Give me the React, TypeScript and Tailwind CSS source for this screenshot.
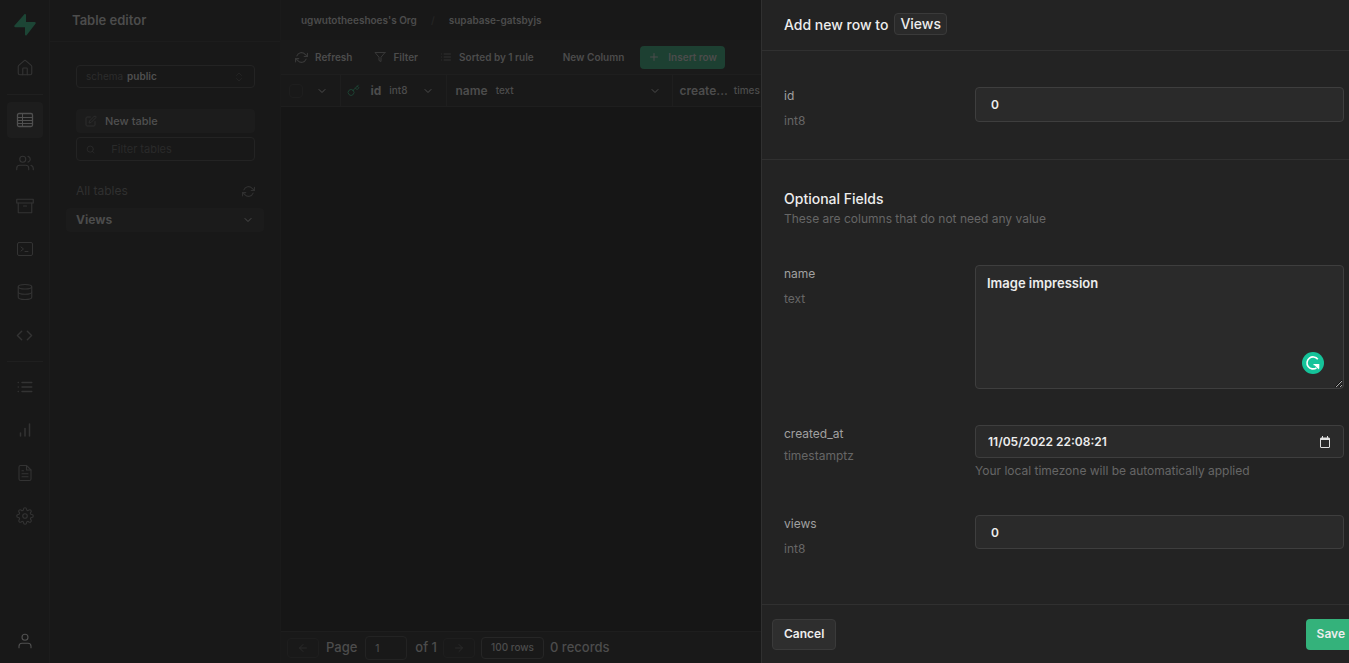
import type { ReactNode } from "react";
import { ArrowLeft, ArrowRight, ChevronDown, ChevronsUpDown, House, Plus } from "lucide-react";
import {
    FiArchive,
    FiBarChart,
    FiCode,
    FiDatabase,
    FiEdit,
    FiFileText,
    FiFilter,
    FiKey,
    FiList,
    FiRefreshCw,
    FiSearch,
    FiSettings,
    FiUser,
    FiUsers,
} from "react-icons/fi";

function Logo() {
    return (
        <svg className="h-6 w-6" viewBox="0 0 24 24" fill="#1c4535">
            <path d="M11.400 1.300c.5-.6 1.600-.3 1.600.5v7.200h8.700c.9 0 1.400 1 .8 1.700L13.600 22.200c-.5.600-1.600.300-1.600-.500v-7.500H2.300c-.9 0-1.400-1-.8-1.700z" />
        </svg>
    );
}

function TableIcon() {
    return (
        <svg className="h-[18px] w-[18px]" viewBox="0 0 18 18" fill="none" stroke="currentColor">
            <rect x="1.500" y="2.500" width="15" height="13" rx="1.500" strokeWidth="1.300" />
            <path d="M2 6.500h14M2 9.500h14M2 12.500h14M6.500 3v12" />
        </svg>
    );
}

function TerminalIcon() {
    return (
        <svg className="h-[18px] w-[18px]" viewBox="0 0 18 18" fill="none" stroke="currentColor" strokeLinecap="round" strokeLinejoin="round">
            <rect x="1.500" y="2.500" width="15" height="13" rx="1.500" />
            <path d="M5 7l2.500 2L5 11M9 11.500h3" />
        </svg>
    );
}

function CalendarIcon() {
    return (
        <svg className="h-3 w-3" viewBox="0 0 12 12" fill="none" stroke="currentColor">
            <rect x="1.500" y="2" width="9" height="9.500" rx="0.500" />
            <path d="M1.500 3h9" strokeWidth="2" />
            <path d="M3.500 0v2M8.500 0v2" />
        </svg>
    );
}

function GrammarlyIcon() {
    return (
        <svg className="h-[22px] w-[22px]" viewBox="0 0 22 22" fill="none">
            <circle cx="11" cy="11" r="11" fill="#15c39a" />
            <path d="M15.800 7.300A6 6 0 1 0 14.500 15.800" stroke="#fff" strokeWidth="1.600" />
            <path d="M11.800 12.600h5v5z" fill="#fff" />
            <path d="M11.500 12.600h5.200v3.800" stroke="#fff" strokeWidth="1.200" />
        </svg>
    );
}

function NavItem({ label, active, children }: { label: string; active?: boolean; children: ReactNode }) {
    return (
        <button
            aria-label={label}
            className={
                active
                    ? "flex h-9 w-9 items-center justify-center rounded bg-[#1d1d1d] text-[#505050]"
                    : "flex h-9 w-9 items-center justify-center rounded text-[#333333]"
            }
        >
            {children}
        </button>
    );
}

function NavBar() {
    return (
        <nav className="flex w-[50px] shrink-0 flex-col items-center gap-[7px] border-r border-[#1c1c1c] bg-[#181818] pt-[7px] pb-1">
            <a href="#" aria-label="Home page" className="flex h-9 w-9 items-center justify-center">
                <Logo />
            </a>
            <NavItem label="Home">
                <House size={18} strokeWidth={1.5} />
            </NavItem>
            <hr className="mt-px w-9 border-[#1f1f1f]" />
            <NavItem label="Table editor" active>
                <TableIcon />
            </NavItem>
            <NavItem label="Authentication">
                <FiUsers size={18} strokeWidth={1.5} />
            </NavItem>
            <NavItem label="Storage">
                <FiArchive size={18} strokeWidth={1.5} />
            </NavItem>
            <NavItem label="SQL editor">
                <TerminalIcon />
            </NavItem>
            <NavItem label="Database">
                <FiDatabase size={18} strokeWidth={1.5} />
            </NavItem>
            <NavItem label="Functions">
                <FiCode size={17} />
            </NavItem>
            <hr className="mt-px w-9 border-[#1f1f1f]" />
            <NavItem label="Logs">
                <FiList size={18} />
            </NavItem>
            <NavItem label="Reports">
                <FiBarChart size={18} />
            </NavItem>
            <NavItem label="API docs">
                <FiFileText size={18} strokeWidth={1.5} />
            </NavItem>
            <NavItem label="Settings">
                <FiSettings size={18} strokeWidth={1.5} />
            </NavItem>
            <button aria-label="Account" className="mt-auto flex h-9 w-9 items-center justify-center text-[#505050]">
                <FiUser size={18} strokeWidth={1.5} />
            </button>
        </nav>
    );
}

function TablesMenu() {
    return (
        <aside className="flex w-[231px] shrink-0 flex-col border-r border-[#1a1a1a] bg-[#181818]">
            <div className="flex h-[42px] items-center border-b border-[#1c1c1c] px-[22px]">
                <h4 className="text-[13px] font-semibold text-[#4c4c4c]">Table editor</h4>
            </div>

            <div className="flex flex-col pt-[23px] pr-[25px] pl-[26px] text-[11px]">
                <button className="mb-[21px] flex h-[23px] items-center rounded border border-[#232323] px-[9px] text-[10px]">
                    <span className="text-[#2c2c2c]">schema</span>
                    <span className="ml-1 font-semibold text-[#505050]">public</span>
                    <ChevronsUpDown size={12} className="ml-auto text-[#232323]" />
                </button>
                <button className="mb-1 flex h-6 items-center gap-2 rounded bg-[#1c1c1c] px-[9px] font-medium text-[#505050]">
                    <FiEdit size={12} className="text-[#2c2c2c]" />
                    New table
                </button>
                <label className="flex h-6 items-center gap-4 rounded border border-[#232323] px-[9px]">
                    <FiSearch size={11} className="text-[#2c2c2c]" />
                    <input aria-label="Filter tables" placeholder="Filter tables" className="w-full min-w-0 outline-none placeholder:text-[#2a2a2a]" />
                </label>
                <div className="mt-5 flex h-5 items-center justify-between text-[12px] text-[#303030]">
                    <span>All tables</span>
                    <FiRefreshCw size={13} />
                </div>
            </div>

            <a href="#" className="mx-4 mt-[7px] flex h-6 items-center justify-between rounded bg-[#1b1b1b] px-[10px] text-[12px] font-bold text-[#4c4c4c]">
                Views
                <ChevronDown size={12} />
            </a>
        </aside>
    );
}

function GridArea() {
    return (
        <main className="flex min-w-0 flex-1 flex-col overflow-hidden bg-[#161616] text-[#4c4c4c]">
            <header className="flex h-10 shrink-0 items-center bg-[#181818] px-5 text-[10px] font-semibold whitespace-nowrap">
                <a href="#">ugwutotheeshoes&apos;s Org</a>
                <span className="px-[14px] text-[#242424]">/</span>
                <a href="#">supabase-gatsbyjs</a>
            </header>

            <div className="flex h-[34px] shrink-0 items-center gap-[22px] bg-[#1a1a1a] pl-[14px] text-[10px] font-semibold whitespace-nowrap">
                <button className="flex items-center gap-[7px]">
                    <FiRefreshCw size={13} className="text-[#383838]" />
                    Refresh
                </button>
                <button className="flex items-center gap-[7px]">
                    <FiFilter size={12} className="text-[#383838]" />
                    Filter
                </button>
                <button className="flex items-center gap-[7px]">
                    <FiList size={12} className="text-[#303030]" />
                    Sorted by 1 rule
                </button>
                <div className="flex items-center gap-4 pl-[7px]">
                    <button>New Column</button>
                    <button className="flex h-[23px] items-center gap-2 rounded bg-[#1d4032] px-2">
                        <Plus size={12} />
                        Insert row
                    </button>
                </div>
            </div>

            <table className="w-full table-fixed border-y border-[#1e1e1e] bg-[#191919] text-left text-[12px]">
                <thead>
                    <tr className="h-8">
                        <th className="w-[59px] border-r border-[#1e1e1e] px-2">
                            <div className="flex items-center justify-between">
                                <input type="checkbox" aria-label="Select all rows" className="h-[14px] w-[14px] appearance-none rounded-sm border border-[#1e1e1e]" />
                                <ChevronDown size={12} className="mr-1" />
                            </div>
                        </th>
                        <th className="w-[106px] border-r border-[#1e1e1e] px-[6px]">
                            <div className="flex items-center">
                                <FiKey size={13} strokeWidth={1.5} className="text-[#1d4a38]" />
                                <span className="ml-[11px] font-bold">id</span>
                                <span className="ml-2 text-[10px] font-medium">int8</span>
                                <ChevronDown size={12} className="mr-[6px] ml-auto" />
                            </div>
                        </th>
                        <th className="w-[226px] border-r border-[#1e1e1e] px-[9px]">
                            <div className="flex items-center">
                                <span className="font-semibold">name</span>
                                <span className="ml-2 text-[10px] font-medium">text</span>
                                <ChevronDown size={12} className="mr-[2px] ml-auto" />
                            </div>
                        </th>
                        <th className="pl-[7px]">
                            <div className="flex items-center">
                                <span className="font-semibold">create...</span>
                                <span className="ml-[6px] text-[10px] font-medium">times</span>
                            </div>
                        </th>
                    </tr>
                </thead>
            </table>

            <footer className="mt-auto flex h-8 shrink-0 items-center border-t border-[#1e1e1e] bg-[#191919] pl-[6px] text-[13px] font-medium">
                <button aria-label="Previous page" className="flex h-5 w-8 items-center justify-center rounded border border-[#1e1e1e] text-[#2a2a2a]">
                    <ArrowLeft size={12} />
                </button>
                <label htmlFor="page" className="ml-[7px]">Page</label>
                <input id="page" defaultValue="1" className="mx-2 h-6 w-[42px] rounded border border-[#232323] px-[9px] text-[10px] outline-none" />
                <span>of 1</span>
                <button aria-label="Next page" className="ml-[6px] flex h-5 w-8 items-center justify-center rounded border border-[#1e1e1e] text-[#2a2a2a]">
                    <ArrowRight size={12} />
                </button>
                <button className="mx-[6px] h-[22px] w-[63px] rounded border border-[#262626] text-[10px]">100 rows</button>
                <span>0 records</span>
            </footer>
        </main>
    );
}

const fieldStyle = "block w-full rounded border border-[#3e3e3e] bg-[#2a2a2a] font-semibold text-[#ededed] outline-none";

function Field({ id, type, compact, children }: { id: string; type: string; compact?: boolean; children: ReactNode }) {
    return (
        <div className="grid grid-cols-[191px_1fr] text-[12px]">
            <div className={compact ? "flex flex-col gap-1 leading-[18px]" : "flex flex-col gap-[7px] leading-[18px]"}>
                <label htmlFor={id} className="text-[#a0a0a0]">{id}</label>
                <span className="text-[#666666]">{type}</span>
            </div>
            <div>{children}</div>
        </div>
    );
}

function RowPanel() {
    return (
        <form className="flex w-[588px] shrink-0 flex-col overflow-hidden border-l border-[#303030] bg-[#232323]">
            <div className="flex h-[51px] shrink-0 items-center gap-[6px] border-b border-[#303030] px-[22px] pb-[2px] text-[14px] font-medium text-[#ededed]">
                Add new row to
                <code className="rounded-sm border border-[#3a3a3a] bg-[#2a2a2a] px-[5px] font-[Inter,sans-serif] leading-5">Views</code>
            </div>

            <div className="border-b border-[#303030] pt-9 pr-[5px] pb-[29px] pl-[22px]">
                <Field id="id" type="int8">
                    <input id="id" defaultValue="0" className={`${fieldStyle} h-[35px] px-[15px]`} />
                </Field>
            </div>

            <div className="flex flex-1 flex-col pt-[29px] pr-[5px] pl-[22px]">
                <h5 className="text-[14px] leading-5 font-medium text-[#ededed]">Optional Fields</h5>
                <p className="text-[12px] leading-5 text-[#666666]">These are columns that do not need any value</p>

                <div className="mt-9 flex flex-col gap-9">
                    <Field id="name" type="text">
                        <div className="relative">
                            <textarea id="name" defaultValue="Image impression" className={`${fieldStyle} h-[124px] px-[11px] py-[7px] text-[13px] leading-5 [color-scheme:dark]`} />
                            <span className="absolute right-5 bottom-[15px]">
                                <GrammarlyIcon />
                            </span>
                        </div>
                    </Field>
                    <Field id="created_at" type="timestamptz" compact>
                        <div className="relative">
                            <input id="created_at" defaultValue="11/05/2022 22:08:21" className={`${fieldStyle} h-[33px] px-3`} />
                            <button type="button" aria-label="Pick a date" className="absolute inset-y-0 right-[13px] text-[#e0e0e0]">
                                <CalendarIcon />
                            </button>
                        </div>
                        <p className="mt-[5px] leading-4 text-[#666666]">Your local timezone will be automatically applied</p>
                    </Field>
                    <Field id="views" type="int8">
                        <input id="views" defaultValue="0" className={`${fieldStyle} h-[34px] px-[15px]`} />
                    </Field>
                </div>
            </div>

            <div className="flex h-[59px] shrink-0 items-center justify-between border-t border-[#303030] pl-[10px] text-[12px] font-semibold text-[#ededed]">
                <button type="button" className="h-[31px] rounded border border-[#3a3a3a] bg-[#2e2e2e] px-[11px]">Cancel</button>
                <button type="button" className="h-[31px] rounded-l bg-[#34b27b] pr-1 pl-[11px]">Save</button>
            </div>
        </form>
    );
}

export default function App() {
    return (
        <div className="flex h-screen overflow-hidden bg-[#181818] font-[Inter,sans-serif]">
            <NavBar />
            <TablesMenu />
            <GridArea />
            <RowPanel />
        </div>
    );
}
